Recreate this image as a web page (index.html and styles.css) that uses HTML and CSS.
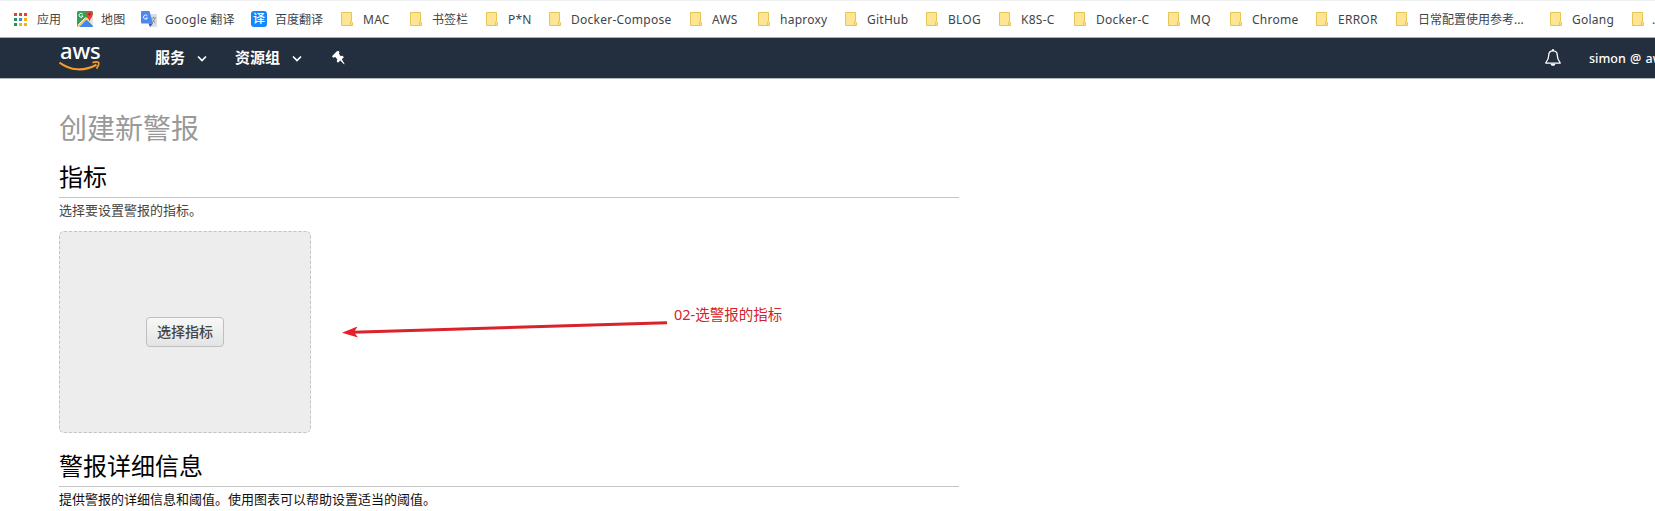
FILE: index.html
```html
<!DOCTYPE html>
<html lang="zh-CN">
<head>
<meta charset="utf-8">
<title>创建新警报</title>
<link rel="stylesheet" href="styles.css">
</head>
<body>
<svg class="defs" width="0" height="0">
  <symbol id="folder" viewBox="0 0 12 14"><path d="M.5.5h10v9.3l1 .7v3H.5z" fill="#fee592" stroke="#e5c558"/><path d="M9.6 13.2v-3.1l1-1.1" fill="none" stroke="#e5c558"/></symbol>
</svg>
<nav class="bookmarks">
  <a class="bm apps"><svg width="13" height="13" viewBox="0 0 13 13"><path fill="#db4437" d="M0 0h3v3H0zM5 0h3v3H5zM10 0h3v3h-3z"/><path fill="#189b58" d="M0 5h3v3H0zM0 10h3v3H0z"/><path fill="#4285f4" d="M5 5h3v3H5z"/><path fill="#f4b400" d="M10 5h3v3h-3zM5 10h3v3H5zM10 10h3v3h-3z"/></svg><span>应用</span></a>
  <a class="bm site"><svg width="16" height="16" viewBox="0 0 16 16"><path d="M1 0h14l1 1v14l-1 1H1l-1-1V1z" fill="#34a05a"/><path d="M9 8l7-5v12z" fill="#e4e6e8"/><path d="M0 15 9.500 6l1.500 2-8 8H1z" fill="#fbd34d"/><path d="M2.500 16 9 9l7 7z" fill="#4285f4"/><path d="M1 14 8.500 6.500" stroke="#f2f2f2"/><path d="M12.500 11C12 7.500 9.300 6.500 9.300 3.200a3.200 3.200 0 0 1 6.400 0C15.700 6.500 13 7.500 12.500 11z" fill="#df4638"/><circle cx="12.500" cy="3.300" r="1.100" fill="#7b231e"/><path d="M5.800 3.200A2 2 0 1 0 6 5H4.200" fill="none" stroke="#fff" stroke-width="1"/></svg><span>地图</span></a>
  <a class="bm site"><svg width="16" height="16" viewBox="0 0 16 16"><path d="M6 3h9a1 1 0 0 1 1 1v11a1 1 0 0 1-1 1H9z" fill="#dedede"/><path d="M1 0h7.500L12 12.500H1a1 1 0 0 1-1-1V1a1 1 0 0 1 1-1z" fill="#4e87ed"/><path d="M7.500 12.500H12L9 16z" fill="#3259bc"/><path d="M6.300 4.800A2.100 2.100 0 1 0 6.500 7H4.600" fill="none" stroke="#fff"/><path d="M10.500 7H15M12.700 5.800V7M14 7c-.3 2.300-1.600 4-3 5M11.500 8.500c.8 1.600 1.700 2.700 3 3.500" fill="none" stroke="#708894" stroke-width=".8"/></svg><span>Google 翻译</span></a>
  <a class="bm site baidu"><b>译</b><span>百度翻译</span></a>
  <a class="bm w69"><svg><use href="#folder"/></svg><span>MAC</span></a>
  <a class="bm w76"><svg><use href="#folder"/></svg><span>书签栏</span></a>
  <a class="bm w63"><svg><use href="#folder"/></svg><span>P*N</span></a>
  <a class="bm w141"><svg><use href="#folder"/></svg><span>Docker-Compose</span></a>
  <a class="bm w68"><svg><use href="#folder"/></svg><span>AWS</span></a>
  <a class="bm w87"><svg><use href="#folder"/></svg><span>haproxy</span></a>
  <a class="bm w81"><svg><use href="#folder"/></svg><span>GitHub</span></a>
  <a class="bm w73"><svg><use href="#folder"/></svg><span>BLOG</span></a>
  <a class="bm w75"><svg><use href="#folder"/></svg><span>K8S-C</span></a>
  <a class="bm w94"><svg><use href="#folder"/></svg><span>Docker-C</span></a>
  <a class="bm w62"><svg><use href="#folder"/></svg><span>MQ</span></a>
  <a class="bm w86"><svg><use href="#folder"/></svg><span>Chrome</span></a>
  <a class="bm w80"><svg><use href="#folder"/></svg><span>ERROR</span></a>
  <a class="bm w154 cjk"><svg><use href="#folder"/></svg><span>日常配置使用参考...</span></a>
  <a class="bm w82"><svg><use href="#folder"/></svg><span>Golang</span></a>
  <a class="bm last"><svg><use href="#folder"/></svg><span>.</span></a>
</nav>
<header class="topnav">
  <div class="logo"><span>aws</span><svg width="41" height="11" viewBox="0 0 41 11"><path d="M.5 1.500C11 9.500 25 10.800 37.500 3.800" fill="none" stroke="#f79b22" stroke-width="2.200"/><path d="M33.500 1.600c2.500-.8 5-.9 6-.2.600 1.500-.5 4.500-2 6.200" fill="none" stroke="#f79b22" stroke-width="1.700"/></svg></div>
  <a class="menu services">服务<svg width="10" height="7" viewBox="0 0 10 7"><path d="m1 1.500 4 4 4-4" fill="none" stroke="#fff" stroke-width="1.700"/></svg></a>
  <a class="menu groups">资源组<svg width="10" height="7" viewBox="0 0 10 7"><path d="m1 1.500 4 4 4-4" fill="none" stroke="#fff" stroke-width="1.700"/></svg></a>
  <svg class="pin" width="13" height="14" viewBox="0 0 13 14"><path d="M4.800.3 6.800 0l.7 1.300-.6 1.200 1.600 2.400 1.900-.2 1.500 1.600-2.100 2 2.600 4.100-.2 1.200-3.900-4L6 11.800l-1.300-1.600.6-1.800-1.900-2.300L1.200 6.800 0 5.300z" fill="#fff"/></svg>
  <svg class="bell" width="16" height="18" viewBox="0 0 16 18"><path d="M8 1.800C4.800 1.800 3.700 4 3.700 6.500 3.700 10 2.700 11.500.9 13.600v.6h14.200v-.6C13.300 11.500 12.300 10 12.300 6.500 12.300 4 11.200 1.800 8 1.800z" fill="none" stroke="#fff" stroke-width="1.300"/><path d="M7 .3h2v1.600H7zM5.600 14.700h4.800C10 17.600 6 17.600 5.600 14.700z" fill="#fff"/></svg>
  <span class="account">simon @ aw</span>
</header>
<main class="content">
  <h1>创建新警报</h1>
  <h2>指标</h2>
  <p>选择要设置警报的指标。</p>
  <div class="metric-row">
    <div class="metric-box"><button class="pick">选择指标</button></div>
    <svg class="arrow" width="326" height="20" viewBox="0 0 326 20"><path d="M11 14.200 325 4.800" stroke="#d9222a" stroke-width="3"/><path d="M0 14.700 15.500 8.500 12 14.200l4 5.400z" fill="#e91d25"/></svg>
    <span class="note">02-选警报的指标</span>
  </div>
  <h2 class="details">警报详细信息</h2>
  <p class="dark">提供警报的详细信息和阈值。使用图表可以帮助设置适当的阈值。</p>
</main>
</body>
</html>
```
FILE: styles.css
```css
* { box-sizing: border-box; }
html, body { height: 100%; }
body { margin: 0; overflow: hidden; background: #fff; font-family: "Noto Sans", "Noto Sans CJK SC", sans-serif; }
svg { display: block; flex: none; }
.defs { position: absolute; }
.bookmarks { display: flex; align-items: center; height: 38px; padding-left: 14px; border-top: 1px solid #eef0f2; border-bottom: 1px solid #a9afb5; color: #414448; font-size: 12px; white-space: nowrap; overflow: hidden; }
.bm { display: flex; align-items: center; gap: 10px; height: 16px; line-height: 16px; flex: none; }
.bm > svg { width: 12px; height: 14px; }
.bm > span { padding-top: 1px; letter-spacing: .25px; }
.apps { width: 63px; }
.apps > svg { width: 13px; height: 13px; }
.site { width: 64px; gap: 8px; }
.site > svg { width: 16px; height: 16px; }
.site + .site { width: 110px; }
.bookmarks .baidu { width: 90px; }
.bm.apps > span, .bm.baidu > span, .bm.cjk > span, .bm.w76 > span { letter-spacing: 0; }
.baidu b { width: 16px; height: 16px; border-radius: 3px; background: #1787fb; color: #fff; font-size: 12px; font-weight: 500; line-height: 15px; text-align: center; }
.w62 { width: 62px; }
.w63 { width: 63px; }
.w68 { width: 68px; }
.w69 { width: 69px; }
.w73 { width: 73px; }
.w75 { width: 75px; }
.w76 { width: 76px; }
.w80 { width: 80px; }
.w81 { width: 81px; }
.w82 { width: 82px; }
.w86 { width: 86px; }
.w87 { width: 87px; }
.w94 { width: 94px; }
.w141 { width: 141px; }
.w154 { width: 154px; }
.last { gap: 8px; }
.last > span { letter-spacing: 0; }
.topnav { display: flex; align-items: center; height: 41px; padding-left: 59px; background: #232f3e; border-bottom: 1px solid #b3b8be; color: #fff; overflow: hidden; }
.logo { width: 96px; height: 39px; flex: none; }
.logo span { display: block; height: 22px; padding-left: 1px; font: 500 22px/22px "Noto Sans", sans-serif; letter-spacing: -.2px; }
.menu { display: flex; align-items: center; gap: 12px; height: 23px; font-size: 15px; font-weight: 700; line-height: 20px; flex: none; padding-bottom: 3px; }
.menu svg { margin-top: 4px; }
.services { width: 80px; }
.groups { width: 98px; }
.pin { margin: -1px 0 0 -1px; }
.bell { margin-left: 1200px; }
.account { margin-left: 28px; font-size: 12.500px; font-weight: 500; letter-spacing: 0; word-spacing: 1px; white-space: nowrap; }
.content { width: 959px; padding: 29px 0 0 59px; }
h1, h2, p { margin: 0; font-weight: 400; }
h1 { height: 51px; color: #999; font-size: 28px; line-height: 40px; }
h2 { height: 39px; border-bottom: 1px solid #c5c5c5; color: #000; font-size: 24px; line-height: 36px; }
p { height: 33px; color: #444; font-size: 13px; line-height: 25px; }
.dark { color: #111; }
.metric-row { display: flex; }
.metric-box { display: flex; align-items: center; justify-content: center; width: 252px; height: 202px; border: 1px dashed #c3c3c3; border-radius: 5px; background: #ededed; flex: none; }
.pick { width: 78px; height: 30px; padding: 0 0 2px; border: 1px solid #bfbfbf; border-radius: 4px; background: linear-gradient(#f8f8f8, #e4e4e4); color: #444; font: 500 14px/26px "Noto Sans CJK SC", sans-serif; }
.arrow { margin: 87px 0 0 31px; }
.note { margin: 72px 0 0 6px; color: #d3222a; font-size: 14.5px; line-height: 22px; white-space: nowrap; }
.details { margin-top: 15px; }
```
